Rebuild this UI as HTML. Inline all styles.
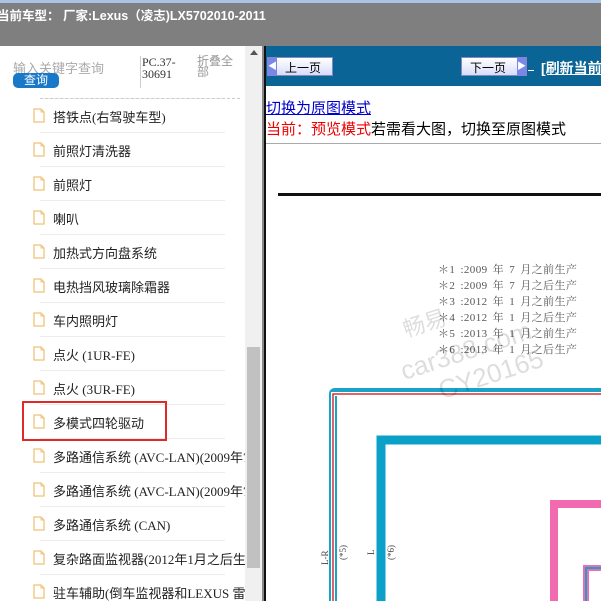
<!DOCTYPE html>
<html><head><meta charset="utf-8"><style>
*{margin:0;padding:0;box-sizing:border-box}
body{width:601px;height:601px;overflow:hidden;position:relative;background:#fff;font-family:"Liberation Sans","Noto Sans CJK SC",sans-serif}
.a{position:absolute}
.top{left:0;top:0;width:601px;height:46px;background:#7f7f7f;border-top:3px solid #a9c4e6}
.title{left:-3px;top:5px;color:#fff;font-size:12.5px;font-weight:bold;white-space:nowrap}
.row{position:absolute;left:40px;width:185px;height:34px;border-top:1px solid #ececec}
.row span{position:absolute;left:13px;top:8px;font-size:13px;color:#222;white-space:nowrap;font-family:"Liberation Serif","Noto Sans CJK SC",sans-serif}
.ic{position:absolute;left:-7px;top:9px;width:12px;height:15px}
.btn{height:19px;background:linear-gradient(#fff,#d8dcf8);border:1px solid #8088c8;font-size:12px;color:#000}
.fn{font-family:"Liberation Serif","Noto Serif CJK SC",serif;font-size:11px;letter-spacing:0.4px;word-spacing:2px;color:#555;white-space:nowrap;left:438px}
</style></head><body>
<div class="a top"></div>
<div class="a title">当前车型：&nbsp;厂家:Lexus（凌志)LX5702010-2011</div>

<div class="a" style="left:13px;top:58px;font-size:13px;color:#aaa">输入关键字查询</div>
<div class="a" style="left:13px;top:73px;width:46px;height:15px;background:#1a78c8;border-radius:5px;color:#fff;font-size:12px;text-align:center;line-height:15px">查询</div>
<div class="a" style="left:140px;top:56px;font-size:12px;line-height:12px;color:#333;font-family:'Liberation Serif',serif;border-left:1px solid #ccc;height:32px;padding-left:1px">PC.37-<br>30691</div>
<div class="a" style="left:197px;top:56px;font-size:12px;line-height:11px;color:#999">折叠全<br>部</div>

<div id="list"></div>
<div class="a" style="left:40px;top:98px;width:200px;border-top:1px dashed #ccc"></div>
<div class="a" style="left:22px;top:401px;width:145px;height:40px;border:2px solid #e02a2a"></div>

<div class="a" style="left:245px;top:46px;width:17px;height:555px;background:#f0f0f0"></div>
<div class="a" style="left:250px;top:50px;width:0;height:0;border:4px solid transparent;border-bottom:5px solid #555;border-top:0"></div>
<div class="a" style="left:247px;top:347px;width:13px;height:221px;background:#c1c1c1"></div>
<div class="a" style="left:262px;top:46px;width:2px;height:555px;background:#888"></div>
<div class="a" style="left:264px;top:46px;width:2px;height:555px;background:#111"></div>

<div class="a" style="left:266px;top:46px;width:335px;height:40px;background:#0a6496"></div>
<div class="a btn" style="left:267px;top:57px;width:66px"><span class="a" style="left:0;top:0;width:9px;height:17px;background:#7a86e8;color:#fff;font-size:9px;line-height:17px;text-align:center">◀</span><span class="a" style="left:17px;top:1px">上一页</span></div>
<div class="a btn" style="left:461px;top:57px;width:66px"><span class="a" style="left:8px;top:1px">下一页</span><span class="a" style="right:0;top:0;width:9px;height:17px;background:#7a86e8;color:#fff;font-size:9px;line-height:17px;text-align:center">▶</span></div>
<div class="a" style="left:528px;top:70px;width:6px;border-top:1px solid #fff"></div>
<div class="a" style="left:541px;top:58px;color:#fff;font-weight:bold;font-size:14px;text-decoration:underline;white-space:nowrap">[刷新当前</div>

<div class="a" style="left:266px;top:97px;font-size:15px;color:#00c;text-decoration:underline;white-space:nowrap">切换为原图模式</div>
<div class="a" style="left:266px;top:118px;font-size:15px;white-space:nowrap"><span style="color:#e00">当前：预览模式</span>若需看大图，切换至原图模式</div>
<div class="a" style="left:266px;top:143px;width:335px;height:1px;background:#aaa"></div>
<div class="a" style="left:278px;top:193px;width:323px;height:3px;background:#111"></div>

<div class="a fn" style="top:261px">＊1 :2009 年 7 月之前生产</div>
<div class="a fn" style="top:277px">＊2 :2009 年 7 月之后生产</div>
<div class="a fn" style="top:293px">＊3 :2012 年 1 月之前生产</div>
<div class="a fn" style="top:309px">＊4 :2012 年 1 月之后生产</div>
<div class="a fn" style="top:325px">＊5 :2013 年 1 月之前生产</div>
<div class="a fn" style="top:341px">＊6 :2013 年 1 月之后生产</div>

<svg class="a" style="left:266px;top:260px" width="335" height="341">
<g fill="none">
<path d="M67 341 V134 Q67 132 69 132 H335" stroke="#19a3c8" stroke-width="8"/>
<path d="M67 341 V134 H335" stroke="#fff" stroke-width="4"/>
<path d="M67 341 V134 H335" stroke="#d0303c" stroke-width="1.5"/>
<path d="M115 341 V180 H335" stroke="#0aa0c8" stroke-width="9"/>
<path d="M288 341 V244 H335" stroke="#f26bb0" stroke-width="8"/>
<path d="M320 341 V308 H335" stroke="#f26bb0" stroke-width="6"/>
<path d="M320 341 V308 H335" stroke="#19a3c8" stroke-width="2"/>
</g>
<g font-family="Liberation Serif,serif" font-size="9" fill="#444">
<text transform="translate(62,305) rotate(-90)">L-R</text>
<text transform="translate(80,300) rotate(-90)">(*5)</text>
<text transform="translate(108,295) rotate(-90)">L</text>
<text transform="translate(128,300) rotate(-90)">(*6)</text>
</g>
<g font-family="Liberation Sans,Noto Sans CJK SC,sans-serif" fill="#000" opacity="0.13" transform="rotate(-18 200 100)">
<text x="150" y="60" font-size="22">畅易</text>
<text x="135" y="100" font-size="26">car388.com</text>
<text x="165" y="130" font-size="26">CY20165</text>
</g>
</svg>

<script>
var items=["搭铁点(右驾驶车型)","前照灯清洗器","前照灯","喇叭","加热式方向盘系统","电热挡风玻璃除霜器","车内照明灯","点火 (1UR-FE)","点火 (3UR-FE)","多模式四轮驱动","多路通信系统 (AVC-LAN)(2009年7月","多路通信系统 (AVC-LAN)(2009年7月","多路通信系统 (CAN)","复杂路面监视器(2012年1月之后生产","驻车辅助(倒车监视器和LEXUS 雷达"];
var h="";
for(var i=0;i<items.length;i++){var t=98+i*34;
h+='<div class="row" style="top:'+t+'px"><svg class="ic" viewBox="0 0 12 15"><path d="M1 1 H8 L11 4 V14 H1 Z" fill="#fff" stroke="#f1c278" stroke-width="1.3"/><path d="M8 1 V4 H11" fill="none" stroke="#f1c278" stroke-width="1"/></svg><span>'+items[i]+'</span></div>';}
document.getElementById("list").innerHTML='<div class="a" style="left:0;top:0;width:245px;height:601px;overflow:hidden">'+h+'</div>';
</script>
</body></html>
